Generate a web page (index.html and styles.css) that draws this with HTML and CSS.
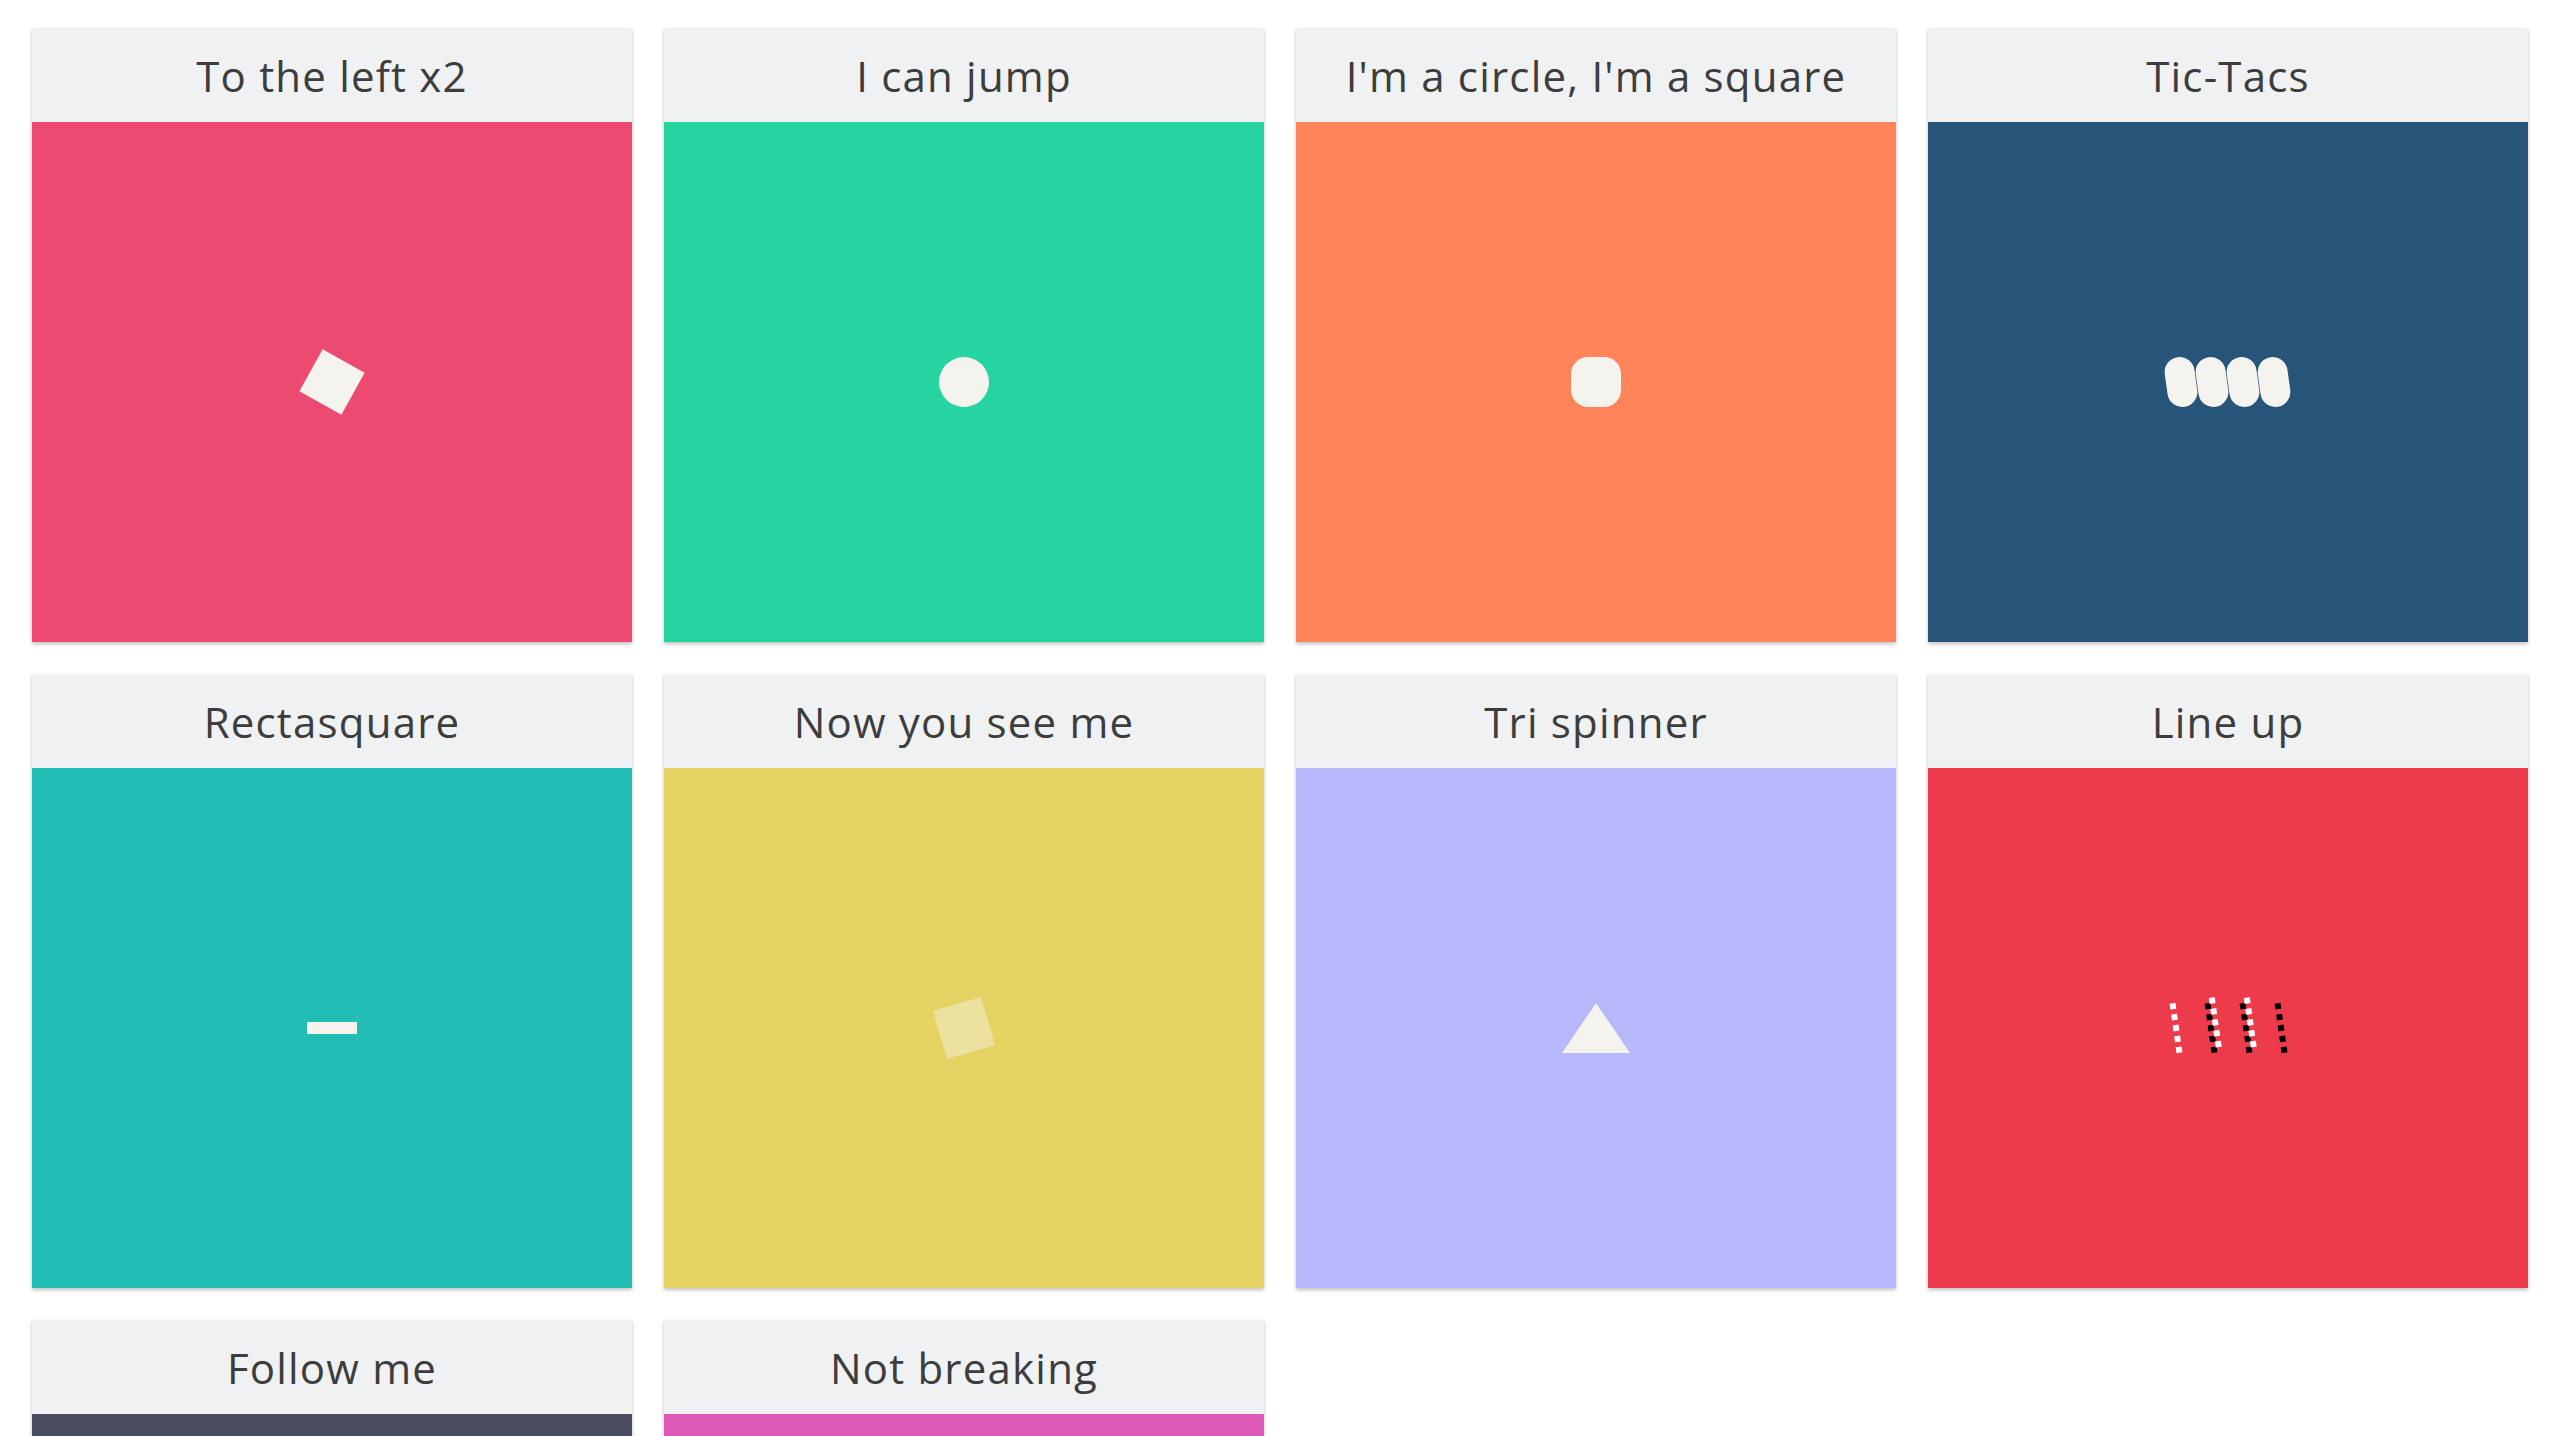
FILE: index.html
```html
<!DOCTYPE html>
<html lang="en">
<head>
<meta charset="utf-8">
<title>Loaders</title>
<link rel="stylesheet" href="styles.css">
</head>
<body>
<main class="grid">
  <section class="card">
    <h2 class="card-title">To the left x2</h2>
    <div class="stage pink"><div class="sq-tilt"></div></div>
  </section>
  <section class="card">
    <h2 class="card-title">I can jump</h2>
    <div class="stage green"><div class="dot"></div></div>
  </section>
  <section class="card">
    <h2 class="card-title">I'm a circle, I'm a square</h2>
    <div class="stage orange"><div class="squircle"></div></div>
  </section>
  <section class="card">
    <h2 class="card-title">Tic-Tacs</h2>
    <div class="stage navy">
      <div class="tictacs"><span></span><span></span><span></span><span></span></div>
    </div>
  </section>
  <section class="card">
    <h2 class="card-title">Rectasquare</h2>
    <div class="stage teal"><div class="bar"></div></div>
  </section>
  <section class="card">
    <h2 class="card-title">Now you see me</h2>
    <div class="stage yellow"><div class="ghost"></div></div>
  </section>
  <section class="card">
    <h2 class="card-title">Tri spinner</h2>
    <div class="stage lavender"><div class="tri"></div></div>
  </section>
  <section class="card">
    <h2 class="card-title">Line up</h2>
    <div class="stage red">
      <div class="lines">
        <div class="col"><i class="w"></i><i class="w"></i><i class="w"></i><i class="w"></i><i class="w"></i></div>
        <div class="col both"><i></i><i></i><i></i><i></i><i></i></div>
        <div class="col both"><i></i><i></i><i></i><i></i><i></i></div>
        <div class="col"><i class="b"></i><i class="b"></i><i class="b"></i><i class="b"></i><i class="b"></i></div>
      </div>
    </div>
  </section>
  <section class="card">
    <h2 class="card-title">Follow me</h2>
    <div class="stage slate"></div>
  </section>
  <section class="card">
    <h2 class="card-title">Not breaking</h2>
    <div class="stage magenta"></div>
  </section>
</main>
</body>
</html>
```

FILE: styles.css
```css
html, body {
  margin: 0;
  padding: 0;
  background: #ffffff;
  font-family: "Open Sans", "Noto Sans", sans-serif;
}

.grid {
  display: grid;
  grid-template-columns: repeat(4, 600px);
  column-gap: 32px;
  row-gap: 32px;
  padding: 28px 32px;
}

.card {
  background: #f0f1f3;
  box-shadow: 0 2px 4px rgba(0, 0, 0, 0.26);
}

.card-title {
  margin: 0;
  height: 94px;
  display: flex;
  align-items: center;
  justify-content: center;
  font-size: 42px;
  font-weight: 500;
  color: #3d3d3d;
  letter-spacing: 1.2px;
}

.stage {
  height: 520px;
  display: flex;
  align-items: center;
  justify-content: center;
  position: relative;
}

.pink { background: #ec4a70; }
.green { background: #25d4a0; }
.orange { background: #ff845a; }
.navy { background: #275579; }
.teal { background: #22bdb5; }
.yellow { background: #e5d464; }
.lavender { background: #b8b9fc; }
.red { background: #ee3b4c; }
.slate { background: #4b4d63; }
.magenta { background: #dc59b8; }

.sq-tilt {
  width: 48px;
  height: 48px;
  background: #f4f3ee;
  transform: rotate(29deg);
}

.dot {
  width: 50px;
  height: 50px;
  border-radius: 50%;
  background: #f4f3ee;
}

.squircle {
  width: 50px;
  height: 50px;
  border-radius: 17px;
  background: #f4f3ee;
}

.tictacs {
  display: flex;
}
.tictacs span {
  width: 30px;
  height: 50px;
  border-radius: 15px;
  background: #f4f3ee;
  transform: rotate(-8deg);
  margin-right: 1px;
}

.bar {
  width: 50px;
  height: 12px;
  background: #f4f3ee;
}

.ghost {
  width: 50px;
  height: 50px;
  background: rgba(245, 243, 238, 0.42);
  transform: rotate(-16deg);
}

.tri {
  width: 0;
  height: 0;
  border-left: 34px solid transparent;
  border-right: 34px solid transparent;
  border-bottom: 50px solid #f4f3ee;
}

.lines {
  display: flex;
  gap: 29px;
}
.col {
  display: flex;
  flex-direction: column;
  gap: 5px;
  transform: rotate(-8deg);
}
.col i {
  display: block;
  width: 6px;
  height: 6px;
  position: relative;
}
.col i.w { background: #ffffff; }
.col i.b { background: #000000; }
.col.both i { background: #000000; }
.col.both i::after {
  content: "";
  position: absolute;
  left: 5px;
  top: -5px;
  width: 6px;
  height: 6px;
  background: #ffffff;
}
```
